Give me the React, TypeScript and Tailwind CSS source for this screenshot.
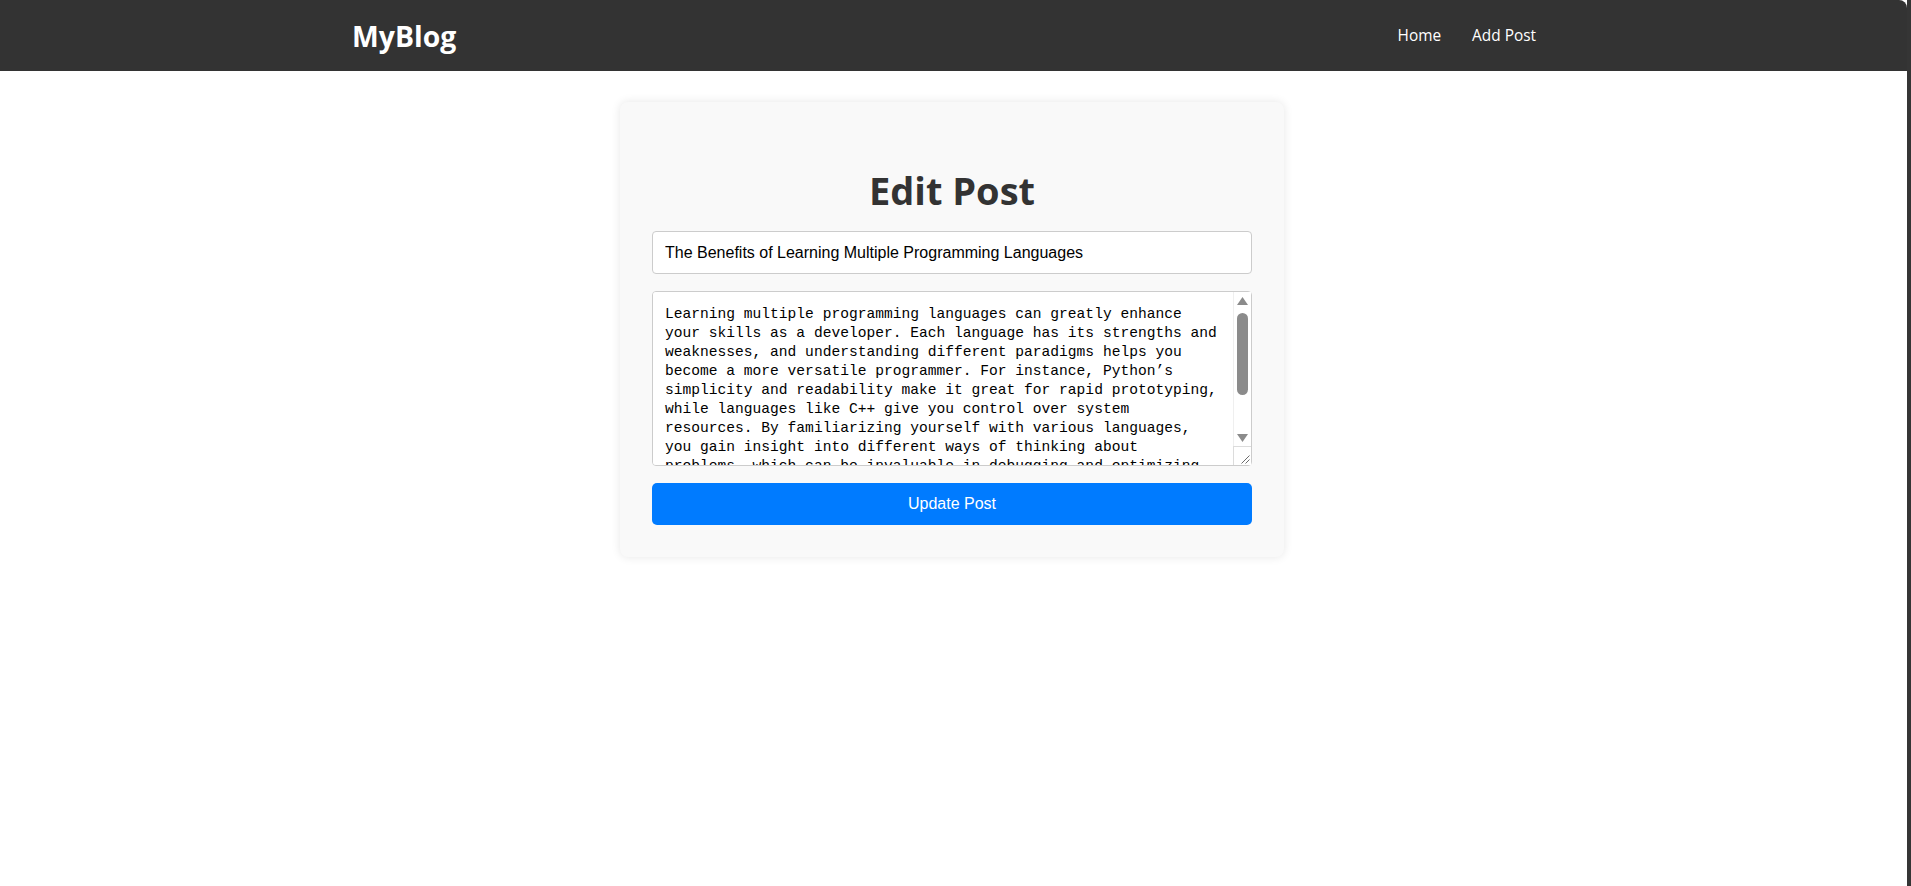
import React, { useState } from 'react';

const initialContent =
  'Learning multiple programming languages can greatly enhance your skills as a developer. Each language has its strengths and weaknesses, and understanding different paradigms helps you become a more versatile programmer. For instance, Python’s simplicity and readability make it great for rapid prototyping, while languages like C++ give you control over system resources. By familiarizing yourself with various languages, you gain insight into different ways of thinking about problems, which can be invaluable in debugging and optimizing your code. Ultimately, being multilingual in programming opens up more career opportunities and makes you a more adaptable developer.';

// テキストエリアのスクロールバー（参照画像のWindows風）
function FakeScrollbar() {
  return (
    <div className="pointer-events-none absolute top-[1px] right-[1px] bottom-[1px] flex w-[18px] flex-col border-l border-[#efefef] bg-white">
      <div className="flex h-[17px] items-center justify-center">
        <svg width="11" height="8" viewBox="0 0 11 8">
          <polygon points="5.5,0 11,8 0,8" fill="#8b8b8b" />
        </svg>
      </div>
      <div className="flex-1 pt-[4px]">
        <div className="mx-auto h-[82px] w-[11px] rounded-full bg-[#8b8b8b]" />
      </div>
      <div className="flex h-[17px] items-center justify-center">
        <svg width="11" height="8" viewBox="0 0 11 8">
          <polygon points="0,0 11,0 5.5,8" fill="#8b8b8b" />
        </svg>
      </div>
      <div className="-ml-[1px] h-[19px] border-t border-l border-[#dcdcdc] bg-white">
        <svg width="18" height="18" viewBox="0 0 18 18">
          <line x1="7.5" y1="16.5" x2="15.5" y2="8.5" stroke="#6b6b6b" strokeWidth="1" />
          <line x1="11.5" y1="16.5" x2="15.5" y2="12.5" stroke="#6b6b6b" strokeWidth="1" />
        </svg>
      </div>
    </div>
  );
}

export default function App() {
  const [title, setTitle] = useState('The Benefits of Learning Multiple Programming Languages');
  const [content, setContent] = useState(initialContent);

  return (
    <div className="min-h-screen bg-[#353535] pr-[4px] font-['Open_Sans',sans-serif]">
      <div className="min-h-[886px] bg-white">
        {/* ナビゲーション */}
        <nav className="h-[71px] rounded-tr-[8px] bg-[#333] pt-[1px] pr-[3px]">
          <div className="mx-auto flex h-full max-w-[1200px] items-center justify-between">
            <a href="#" className="text-[28.4px] font-bold text-white">
              MyBlog
            </a>
            <ul className="mr-[16px] flex gap-[31px] text-[15.4px] text-white">
              <li>
                <a href="#">Home</a>
              </li>
              <li>
                <a href="#">Add Post</a>
              </li>
            </ul>
          </div>
        </nav>

        <main className="pt-[31px] pr-[3px]">
          <div className="mx-auto w-[664px] rounded-[8px] bg-[#f9f9f9] px-[32px] pt-[32px] pb-[32px] shadow-[0_0_10px_rgba(0,0,0,0.1)]">
            <h2 className="mt-[32px] mb-[17px] text-center text-[38px] leading-[48px] font-bold text-[#333]">
              Edit Post
            </h2>
            <form className="flex flex-col gap-[17px]" onSubmit={(e) => e.preventDefault()}>
              <input
                type="text"
                value={title}
                onChange={(e) => setTitle(e.currentTarget.value)}
                className="h-[43px] w-full rounded-[4px] border border-[#ccc] bg-white px-[12px] font-['Liberation_Sans',Arial,sans-serif] text-[16px] text-black outline-none"
              />
              <div className="relative h-[175px]">
                <textarea
                  value={content}
                  onChange={(e) => setContent(e.currentTarget.value)}
                  className="block h-full w-full resize-none rounded-[4px] border border-[#ccc] bg-white pt-[13px] pr-[29px] pb-[12px] pl-[12px] font-['Liberation_Mono',monospace] text-[14.6px] leading-[19px] text-black outline-none [scrollbar-width:none]"
                />
                <FakeScrollbar />
              </div>
              <button
                type="submit"
                className="h-[42px] w-full rounded-[5px] bg-[#007bff] font-['Liberation_Sans',Arial,sans-serif] text-[16px] text-white"
              >
                Update Post
              </button>
            </form>
          </div>
        </main>
      </div>
    </div>
  );
}
